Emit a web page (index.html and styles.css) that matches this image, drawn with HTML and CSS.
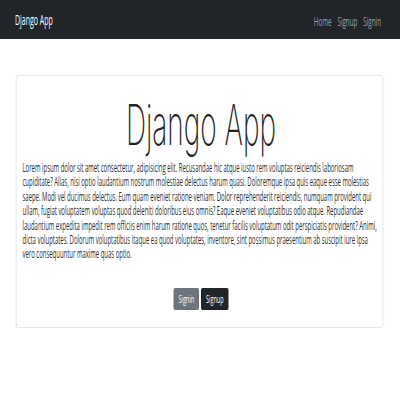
FILE: index.html
```
<!DOCTYPE html>
<html lang="en">
<head>
<meta charset="utf-8">
<title>Django App</title>
<link rel="stylesheet" href="styles.css">
</head>
<body>
<div class="page">
  <nav class="navbar">
    <a class="brand" href="#">Django App</a>
    <ul class="nav">
      <li><a href="#">Home</a></li>
      <li><a href="#">Signup</a></li>
      <li><a href="#">Signin</a></li>
    </ul>
  </nav>
  <main class="container">
    <section class="card">
      <h1 class="title">Django App</h1>
      <p class="lead">Lorem ipsum dolor sit amet consectetur, adipisicing elit. Recusandae hic atque iusto rem voluptas reiciendis laboriosam cupiditate? Alias, nisi optio laudantium nostrum molestiae delectus harum quasi. Doloremque ipsa quis eaque esse molestias saepe. Modi vel ducimus delectus. Eum quam eveniet ratione veniam. Dolor reprehenderit reiciendis, numquam provident qui ullam, fugiat voluptatem voluptas quod deleniti doloribus eius omnis? Eaque eveniet voluptatibus odio atque. Repudiandae laudantium expedita impedit rem officiis enim harum ratione quos, tenetur facilis voluptatum odit perspiciatis provident? Animi, dicta voluptates. Dolorum voluptatibus itaque ea quod voluptates, inventore, sint possimus praesentium ab suscipit iure ipsa vero consequuntur maxime quas optio.</p>
      <div class="actions">
        <a class="btn btn-secondary" href="#">Signin</a>
        <a class="btn btn-dark" href="#">Signup</a>
      </div>
    </section>
  </main>
</div>
</body>
</html>
```
FILE: styles.css
```
html, body {
  margin: 0;
  padding: 0;
  background: #ffffff;
  overflow: hidden;
}
body {
  font-family: "Open Sans", "Noto Sans", "Liberation Sans", sans-serif;
  color: #212529;
}
.page {
  width: 800px;
  transform: scaleX(0.5);
  transform-origin: 0 0;
}
.navbar {
  height: 39px;
  background: #212529;
  display: flex;
  align-items: center;
  justify-content: space-between;
  padding: 0 38px 0 30px;
}
.brand {
  color: #ffffff;
  text-decoration: none;
  font-size: 14px;
}
.nav {
  list-style: none;
  margin: 0;
  padding: 0;
  display: flex;
  gap: 12px;
}
.nav a {
  color: rgba(255, 255, 255, 0.55);
  text-decoration: none;
  font-size: 12.5px;
}
.container {
  padding: 36px 34px 0 32px;
}
.card {
  border: 1px solid #dee2e6;
  border-radius: 4px;
  box-shadow: 0 1px 3px rgba(0, 0, 0, 0.08);
  padding: 14px 6px 17px 12px;
}
.title {
  margin: 0;
  text-align: center;
  font-family: "Inter", "Roboto", "Open Sans", sans-serif;
  font-weight: 200;
  font-size: 56px;
  line-height: 70px;
  color: #212529;
}
.lead {
  margin: 0;
  font-size: 11.9px;
  line-height: 14.4px;
  color: #2b2f33;
}
.actions {
  display: flex;
  justify-content: center;
  gap: 4px;
  margin-top: 27px;
}
.btn {
  display: flex;
  align-items: center;
  justify-content: center;
  height: 22px;
  padding: 0 10px;
  border-radius: 3px;
  color: #ffffff;
  text-decoration: none;
  font-size: 11px;
}
.btn-secondary {
  background: #6c757d;
}
.btn-dark {
  background: #212529;
}
```
